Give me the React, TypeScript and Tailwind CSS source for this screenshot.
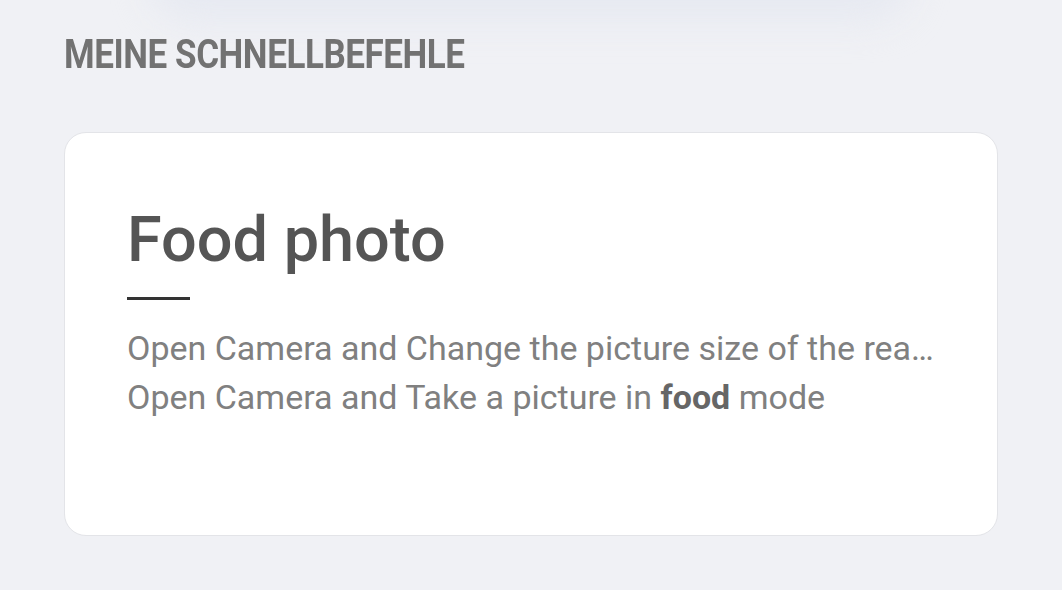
export default function App() {
  return (
    <div className="relative w-[1062px] h-[590px] overflow-hidden bg-[#f0f1f5] font-['Roboto',sans-serif]">
      {/* faint shadow of the element above */}
      <div className="absolute left-[150px] top-[-60px] w-[760px] h-[80px] rounded-[40px] bg-[#e6e9f1] blur-[18px]" />

      <div className="relative px-[64px] pt-[35px]">
        <h2 className="origin-left scale-x-[0.875] whitespace-nowrap text-[40px] leading-[40px] font-bold tracking-[-0.5px] text-[#727272]">
          MEINE SCHNELLBEFEHLE
        </h2>

        <div className="mt-[57px] h-[404px] rounded-[22px] border border-[#e3e4e8] bg-white px-[62px] pt-[71px]">
          <h1 className="text-[63px] leading-[72px] font-medium text-[#555555]">Food photo</h1>
          <div className="mt-[21px] h-[3px] w-[63px] bg-[#333333]" />
          <div className="mt-[24px] whitespace-nowrap text-[34px] leading-[49px] text-[#808080]">
            <p>Open Camera and Change the picture size of the rea…</p>
            <p>
              Open Camera and Take a picture in <span className="font-bold text-[#666666]">food</span> mode
            </p>
          </div>
        </div>
      </div>
    </div>
  );
}
